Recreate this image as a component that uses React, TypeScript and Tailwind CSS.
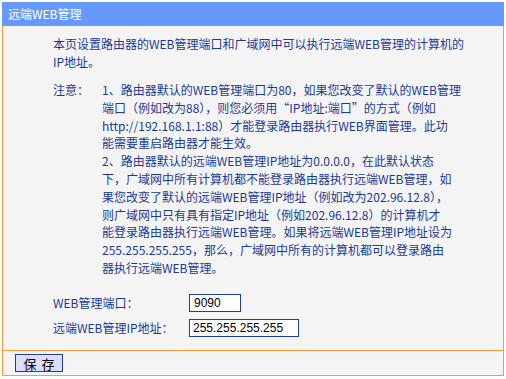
const intro = [
  '本页设置路由器的WEB管理端口和广域网中可以执行远端WEB管理的计算机的',
  'IP地址。',
]

const notes = [
  '1、路由器默认的WEB管理端口为80，如果您改变了默认的WEB管理',
  '端口（例如改为88），则您必须用“IP地址:端口”的方式（例如',
  'http://192.168.1.1:88）才能登录路由器执行WEB界面管理。此功',
  '能需要重启路由器才能生效。',
  '2、路由器默认的远端WEB管理IP地址为0.0.0.0，在此默认状态',
  '下，广域网中所有计算机都不能登录路由器执行远端WEB管理，如',
  '果您改变了默认的远端WEB管理IP地址（例如改为202.96.12.8），',
  '则广域网中只有具有指定IP地址（例如202.96.12.8）的计算机才',
  '能登录路由器执行远端WEB管理。如果将远端WEB管理IP地址设为',
  '255.255.255.255，那么，广域网中所有的计算机都可以登录路由',
  '器执行远端WEB管理。',
]

const font = "font-['Noto_Sans_CJK_SC',sans-serif]"

export default function App() {
  return (
    <div className={`pl-[2px] pt-[2px] ${font} text-[12px]`}>
      <div className="w-[502px]">
        {/* Title bar */}
        <div className="h-[24px] bg-[#6699FF] text-white flex items-center pl-[6px] leading-none">
          远端WEB管理
        </div>

        {/* Body */}
        <div className="h-[324px] border-x border-[#FF9933] bg-[#F4F4F4] pt-[9px] pl-[50px] text-[#1A3A9A]">
          <div className="leading-[18px] whitespace-nowrap">
            {intro.map(l => <div key={l}>{l}</div>)}
          </div>

          <div className="flex mt-[10px] leading-[17.8px] whitespace-nowrap">
            <div className="w-[49px] shrink-0">注意：</div>
            <div>
              {notes.map(l => <div key={l}>{l}</div>)}
            </div>
          </div>

          <div className="flex items-center h-[18px] mt-[17px]">
            <div className="w-[136px]">WEB管理端口：</div>
            <div className="w-[52px] h-[18px] border border-[#1D3F9E] bg-white text-black flex items-center pl-[4px] font-['Liberation_Sans',sans-serif]">
              9090
            </div>
          </div>
          <div className="flex items-center h-[18px] mt-[7px]">
            <div className="w-[136px]">远端WEB管理IP地址：</div>
            <div className="w-[110px] h-[18px] border border-[#1D3F9E] bg-white text-black flex items-center pl-[3px] font-['Liberation_Sans',sans-serif]">
              255.255.255.255
            </div>
          </div>
        </div>

        {/* Footer */}
        <div className="h-[26px] border border-[#FF9933] bg-[#F4F4F4] flex items-center pl-[12px]">
          <button className="w-[48px] h-[18px] border border-[#1D3F9E] bg-[#DDDDFF] text-black text-[13px] leading-none flex items-center justify-center gap-[5px]">
            <span>保</span>
            <span>存</span>
          </button>
        </div>
      </div>
    </div>
  )
}
